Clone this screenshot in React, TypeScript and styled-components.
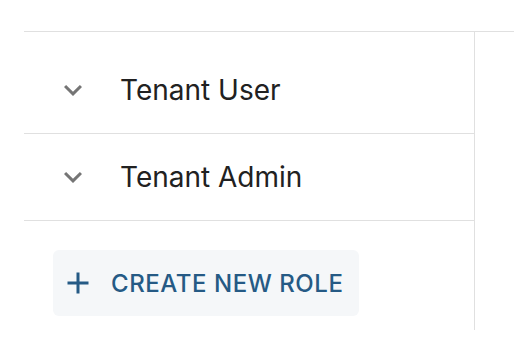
import React from 'react';
import styled, { createGlobalStyle } from 'styled-components';

const GlobalStyle = createGlobalStyle`
  html, body {
    margin: 0;
    padding: 0;
    background: #ffffff;
    font-family: Inter, "Noto Sans", sans-serif;
  }
`;

const roles = ['Tenant User', 'Tenant Admin'];

const ExpandIcon = () => (
  <svg width="36" height="36" viewBox="0 0 24 24" fill="#757575">
    <path d="M16.59 8.59L12 13.17 7.41 8.59 6 10l6 6 6-6z" />
  </svg>
);

const AddIcon = () => (
  <svg width="36" height="36" viewBox="0 0 24 24" fill="currentColor">
    <path d="M19 13h-6v6h-2v-6H5v-2h6V5h2v6h6v2z" />
  </svg>
);

const App = () => {
  return (
    <>
      <GlobalStyle />
      <Page>
        <Panel>
          <RoleList>
            {roles.map((role) => (
              <RoleRow key={role}>
                <ExpandIcon />
                <RoleName>{role}</RoleName>
              </RoleRow>
            ))}
            <CreateButton type="button">
              <AddIcon />
              <span>CREATE NEW ROLE</span>
            </CreateButton>
          </RoleList>
          <Detail />
        </Panel>
      </Page>
    </>
  );
};

export default App;

const Page = styled.div`
  width: 514px;
  height: 358px;
  padding: 31px 0 0 24px;
  box-sizing: border-box;
`;

const Panel = styled.div`
  display: flex;
  border-top: 1px solid #e0e0e0;
`;

const RoleList = styled.div`
  width: 450px;
  padding: 15px 0 14px;
  border-right: 1px solid #e0e0e0;
  display: flex;
  flex-direction: column;
  align-items: flex-start;
`;

const RoleRow = styled.div`
  cursor: pointer;
  display: flex;
  align-items: center;
  gap: 29px;
  width: 100%;
  height: 87px;
  padding-left: 31px;
  box-sizing: border-box;
  border-bottom: 1px solid #e0e0e0;
  svg {
    flex-shrink: 0;
  }
`;

const RoleName = styled.div`
  font-size: 28px;
  color: #212121;
  white-space: nowrap;
`;

const CreateButton = styled.button`
  margin: 29px 0 0 29px;
  display: flex;
  align-items: center;
  gap: 15px;
  height: 66px;
  padding: 0 16px 0 7px;
  border: none;
  border-radius: 6px;
  background: #f5f7f9;
  color: #255a85;
  font-family: Inter, "Noto Sans", sans-serif;
  font-size: 24px;
  font-weight: 500;
  letter-spacing: 0.55px;
  cursor: pointer;
`;

const Detail = styled.div`
  flex: 1;
`;
